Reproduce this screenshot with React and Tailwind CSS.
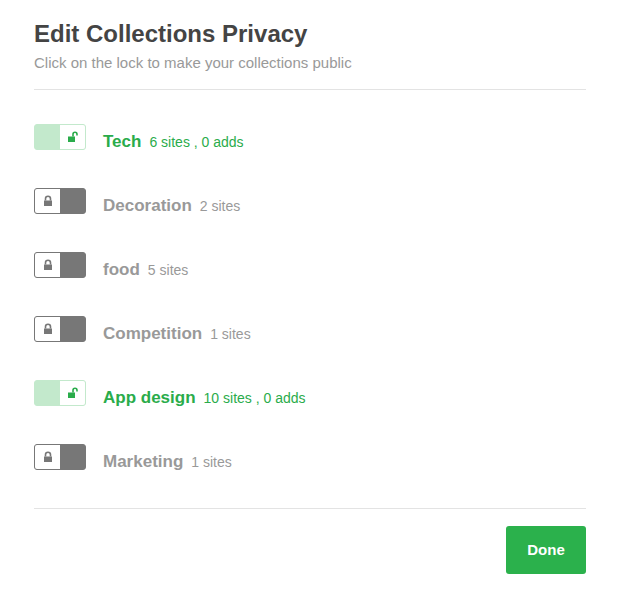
import React, { useState } from 'react';

const initialCollections = [
  { id: 1, name: 'Tech', sites: 6, adds: 0, isPublic: true },
  { id: 2, name: 'Decoration', sites: 2, isPublic: false },
  { id: 3, name: 'food', sites: 5, isPublic: false },
  { id: 4, name: 'Competition', sites: 1, isPublic: false },
  { id: 5, name: 'App design', sites: 10, adds: 0, isPublic: true },
  { id: 6, name: 'Marketing', sites: 1, isPublic: false },
];

const LockIcon = ({ open }) =>
  open ? (
    <svg width="12" height="12" viewBox="0 0 12 12">
      <path d="M6 5.5V3.2a2 2 0 0 1 4 0V4.5" fill="none" stroke="#2aac4b" strokeWidth="1.6" />
      <rect x="1" y="5.5" width="7" height="5.5" fill="#2aac4b" />
    </svg>
  ) : (
    <svg width="10" height="12" viewBox="0 0 10 12">
      <path d="M2.5 5.5V3.8a2.5 2.5 0 0 1 5 0V5.5" fill="none" stroke="#777" strokeWidth="1.6" />
      <rect x="1" y="5.5" width="8" height="5.5" fill="#777" />
    </svg>
  );

const LockToggle = ({ isPublic, onClick }) => (
  <button
    onClick={onClick}
    className={`flex h-[26px] w-[52px] shrink-0 overflow-hidden rounded-[3px] border ${
      isPublic ? 'border-[#c3e9cc] bg-[#c3e9cc]' : 'border-[#777] bg-[#777]'
    }`}
  >
    {isPublic ? (
      <>
        <span className="h-full w-[25px]" />
        <span className="flex h-full flex-1 items-center justify-center bg-white">
          <LockIcon open />
        </span>
      </>
    ) : (
      <>
        <span className="flex h-full w-[25px] items-center justify-center bg-white">
          <LockIcon />
        </span>
        <span className="h-full flex-1" />
      </>
    )}
  </button>
);

const App = () => {
  const [collections, setCollections] = useState(initialCollections);

  const toggleCollection = (id) => {
    setCollections((prev) =>
      prev.map((c) => (c.id === id ? { ...c, isPublic: !c.isPublic } : c))
    );
  };

  return (
    <div
      className="h-[591px] w-[620px] bg-white px-[34px] pt-[19px]"
      style={{ fontFamily: '"Liberation Sans", Arial, sans-serif' }}
    >
      <h1 className="text-[24px] font-bold leading-[30px] text-[#444]">
        Edit Collections Privacy
      </h1>
      <p className="mt-[4px] text-[15px] leading-[20px] text-[#999]">
        Click on the lock to make your collections public
      </p>
      <div className="mt-[16px] border-t border-[#e3e3e3]" />

      <div className="flex flex-col pb-[19px] pt-[15px]">
        {collections.map((c) => (
          <div key={c.id} className="flex h-[64px] items-center">
            <LockToggle isPublic={c.isPublic} onClick={() => toggleCollection(c.id)} />
            <div
              className={`ml-[17px] mt-[10px] flex items-baseline ${
                c.isPublic ? 'text-[#2aac4b]' : 'text-[#999]'
              }`}
            >
              <span className="text-[17px] font-bold">{c.name}</span>
              <span className="ml-[8px] text-[14px]">
                {c.sites} sites{c.isPublic ? ` , ${c.adds ?? 0} adds` : ''}
              </span>
            </div>
          </div>
        ))}
      </div>

      <div className="border-t border-[#e3e3e3]" />
      <div className="flex justify-end pt-[17px]">
        <button className="h-[48px] w-[80px] rounded-[3px] bg-[#2bb14c] text-[15px] font-bold text-white">
          Done
        </button>
      </div>
    </div>
  );
};

export default App;
